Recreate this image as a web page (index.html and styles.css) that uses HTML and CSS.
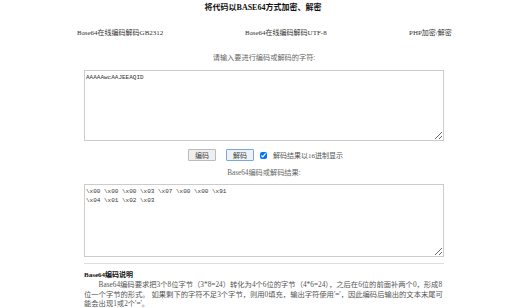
FILE: index.html
```html
<!DOCTYPE html>
<html>
    <head>
        <title>将代码以BASE64方式加密、解密</title>
        <link rel="stylesheet" href="styles.css">
    </head>
    <body>
        <h1 class="titulo">将代码以BASE64方式加密、解密</h1>
        <div class="menu">
            <a href="#">Base64在线编码解码GB2312</a>
            <a href="#">Base64在线编码解码UTF-8</a>
            <a href="#">PHP加密/解密</a>
        </div>
        <div class="caixa">
            <p class="rotulo">请输入要进行编码或解码的字符:</p>
            <textarea class="campo" id="entrada">AAAAAwcAAJEEAQID</textarea>
            <div class="acoes">
                <button class="botao">编码</button>
                <button class="botao ativo">解码</button>
                <label class="opcao"><input type="checkbox" checked> 解码结果以16进制显示</label>
            </div>
            <p class="rotulo">Base64编码或解码结果:</p>
            <textarea class="campo alto" id="saida">\x00 \x00 \x00 \x03 \x07 \x00 \x00 \x91
\x04 \x01 \x02 \x03</textarea>
            <hr class="linha">
            <h2 class="subtitulo">Base64编码说明</h2>
            <p class="texto">Base64编码要求把3个8位字节（3*8=24）转化为4个6位的字节（4*6=24），之后在6位的前面补两个0，形成8位一个字节的形式。 如果剩下的字符不足3个字节，则用0填充，输出字符使用'='，因此编码后输出的文本末尾可能会出现1或2个'='。</p>
        </div>
    </body>
</html>
```
FILE: styles.css
```css
body{
    margin: 0;
    font-family: "Liberation Serif", "Noto Sans CJK SC", serif;
    font-size: 7px;
    color: #444;
    background: #fff;
}
.titulo{
    font-size: 8px;
    line-height: 10px;
    margin: 3px 0 0;
    text-align: center;
    color: #111;
}
.menu{
    display: grid;
    grid-template-columns: 168px 164px auto;
    margin: 15px 0 0 77px;
    line-height: 10px;
}
.menu a{
    color: #333;
    text-decoration: none;
}
.caixa{
    width: 360px;
    margin: 0 auto;
    padding-left: 2px;
}
.rotulo{
    text-align: center;
    font-size: 7.2px;
    line-height: 10px;
    margin: 15px 0 7px;
    color: #666;
}
.acoes + .rotulo{
    margin: 7px 0 6px;
}
.campo{
    display: block;
    box-sizing: border-box;
    width: 360px;
    height: 71px;
    margin: 0;
    padding: 2px 1px;
    border: 1px solid #ccc;
    font-family: "Liberation Mono", monospace;
    font-size: 6px;
    line-height: 9px;
    color: #333;
}
.alto{
    height: 73px;
}
.acoes{
    display: flex;
    align-items: center;
    margin: 8px 0 0 104px;
    height: 12px;
}
.botao{
    font-family: "Liberation Serif", "Noto Sans CJK SC", serif;
    font-size: 7px;
    height: 12px;
    padding: 0 6px;
    margin-right: 10px;
    background: #efefef;
    border: 1px solid #bbb;
    border-radius: 1px;
    color: #444;
}
.ativo{
    margin-right: 6px;
    border-color: #7aa7e0;
    background: #eef2f7;
}
.opcao{
    display: flex;
    align-items: center;
    gap: 6px;
    color: #555;
}
.opcao input{
    width: 7px;
    height: 7px;
    margin: 0;
}
.linha{
    border: 0;
    border-top: 1px solid #ddd;
    margin: 6px 0 0;
}
.subtitulo{
    font-size: 7px;
    line-height: 10px;
    margin: 6px 0 0;
    color: #111;
}
.texto{
    margin: 0;
    font-size: 7.3px;
    line-height: 9.5px;
    text-indent: 2em;
    color: #555;
}
```
